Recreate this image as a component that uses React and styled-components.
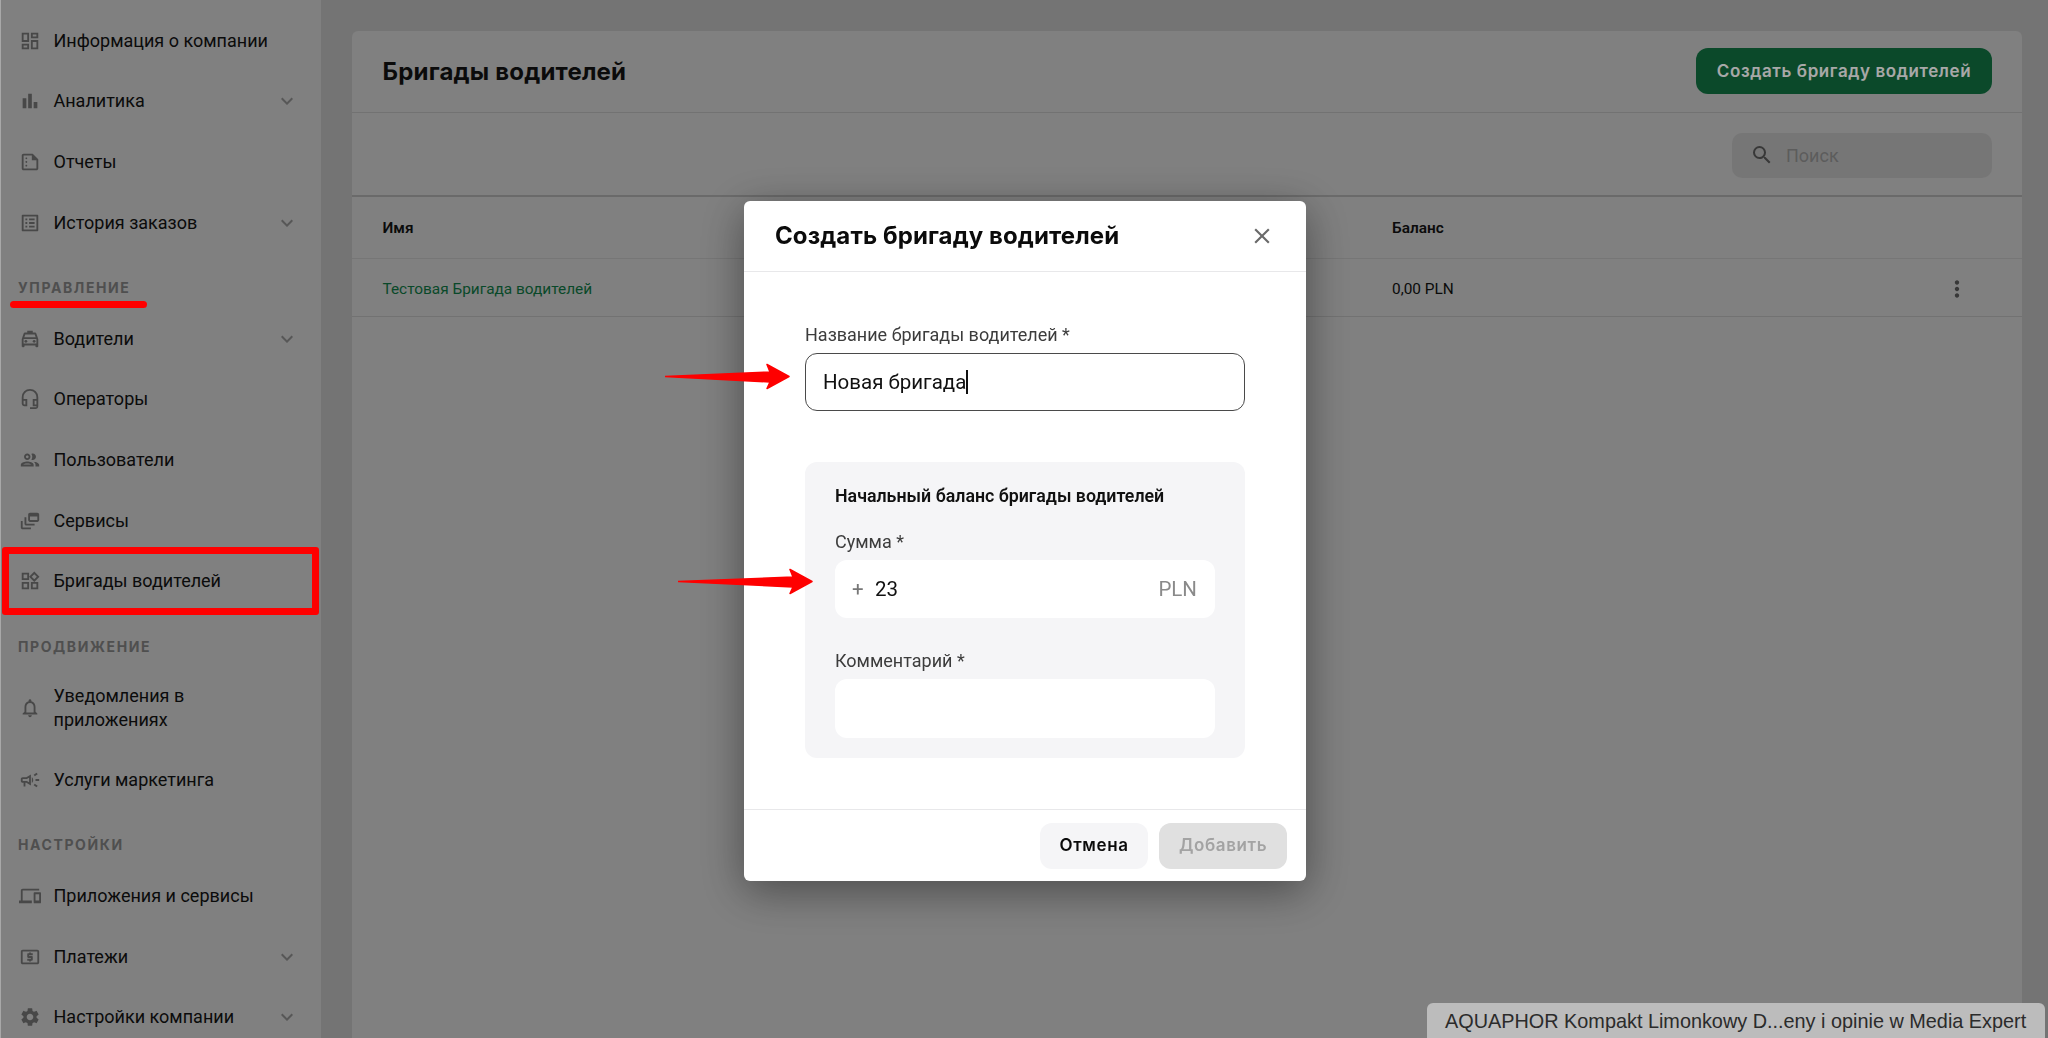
import React from 'react'
import styled, { createGlobalStyle } from 'styled-components'
import {
  MdBarChart,
  MdClose,
  MdExpandMore,
  MdMoreVert,
  MdOutlineCampaign,
  MdOutlineDashboard,
  MdOutlineDevices,
  MdOutlineDynamicFeed,
  MdOutlineHeadsetMic,
  MdOutlineListAlt,
  MdOutlineLocalAtm,
  MdOutlineLocalTaxi,
  MdOutlineNotifications,
  MdOutlinePeople,
  MdOutlineSummarize,
  MdOutlineWidgets,
  MdSearch,
  MdSettings,
} from 'react-icons/md'

const BODY_FONT = "Roboto, 'Liberation Sans', sans-serif"
const HEADING_FONT = "Inter, 'Noto Sans', sans-serif"

const GlobalStyle = createGlobalStyle`
  html, body {
    margin: 0;
    height: 100%;
    overflow: hidden;
  }
  body {
    font-family: ${BODY_FONT};
    color: #111;
  }
  * {
    box-sizing: border-box;
  }
`

const Page = styled.div`
  display: flex;
  height: 100vh;
  background: #b1b1b1;
  overflow: hidden;
`

const Sidebar = styled.nav`
  flex: 0 0 321px;
  padding-top: 10.3px;
  background: #c2c2c2;
  border-left: 1px solid #fff;
  overflow: hidden;
`

const NavRow = styled.div`
  display: flex;
  align-items: center;
  height: ${(p) => (p.$tall ? '82.6px' : '60.67px')};
  padding: 0 22px 0 18px;
  font-size: 18px;
  line-height: 24px;
  color: #111;

  svg {
    flex: 0 0 auto;
  }
`

const NavIcon = styled.span`
  display: flex;
  flex: 0 0 34.5px;
  font-size: 22px;
  color: #6e6e6e;
`

const NavText = styled.span`
  flex: 1;
  max-width: 226px;
`

const NavChevron = styled(MdExpandMore)`
  margin-left: auto;
  font-size: 24px;
  color: #858585;
`

const SectionLabel = styled.div`
  height: 55.4px;
  padding: 25px 0 0 17px;
  font-family: ${HEADING_FONT};
  font-size: 14px;
  font-weight: 700;
  line-height: 20px;
  letter-spacing: 1.6px;
  color: #787878;
`

const Main = styled.main`
  flex: 1;
  padding: 31px 26px 0 31px;
  min-width: 0;
`

const Card = styled.section`
  height: 100%;
  background: #c2c2c2;
  border-radius: 6px 6px 0 0;
`

const CardHeader = styled.header`
  display: flex;
  align-items: center;
  justify-content: space-between;
  height: 82px;
  padding: 0 30px 1px 30.5px;
  border-bottom: 1px solid #adadad;
`

const CardTitle = styled.h1`
  margin: 0;
  font-family: ${HEADING_FONT};
  font-size: 24px;
  font-weight: 700;
  letter-spacing: 0.2px;
  color: #111;
`

const PrimaryButton = styled.button`
  width: 296px;
  height: 46px;
  border: 0;
  border-radius: 12px;
  background: #117041;
  color: #fff;
  font-family: ${HEADING_FONT};
  font-size: 17px;
  font-weight: 600;
  letter-spacing: 0.6px;
`

const Toolbar = styled.div`
  display: flex;
  justify-content: flex-end;
  align-items: center;
  height: 84px;
  padding: 2px 30px 0 0;
  border-bottom: 2px solid #a2a2a2;
`

const SearchBox = styled.div`
  display: flex;
  align-items: center;
  gap: 12px;
  width: 260px;
  height: 45px;
  padding: 0 18px;
  border-radius: 10px;
  background: #b4b4b4;
  font-size: 18px;
  color: #8c8c8c;

  svg {
    font-size: 24px;
    color: #555;
  }
`

const TableRow = styled.div`
  display: grid;
  grid-template-columns: 1009.5px 1fr 48px;
  align-items: center;
  height: ${(p) => (p.$head ? '62px' : '58px')};
  padding: ${(p) => (p.$head ? '0' : '3px')} 30px 0 30.5px;
  border-bottom: 1px solid ${(p) => (p.$head ? '#b3b3b3' : '#adadad')};
  font-size: 15.4px;
  font-weight: ${(p) => (p.$head ? 600 : 400)};
`

const TeamLink = styled.span`
  color: #0f7040;
`

const RowMenu = styled(MdMoreVert)`
  font-size: 26px;
  color: #555;
`

const Overlay = styled.div`
  position: fixed;
  inset: 0;
  display: flex;
  justify-content: center;
  align-items: flex-start;
  padding-top: 201px;
  padding-left: 2px;
  background: rgba(0, 0, 0, 0.34);
`

const Modal = styled.div`
  width: 562px;
  height: 680px;
  background: #fff;
  border-radius: 6px;
  box-shadow: 0 10px 44px rgba(0, 0, 0, 0.42);
  display: flex;
  flex-direction: column;
`

const ModalHeader = styled.header`
  display: flex;
  align-items: center;
  justify-content: space-between;
  flex: 0 0 71px;
  padding: 0 31px 1px 31px;
  border-bottom: 1px solid #e8e8ea;
`

const ModalTitle = styled.h2`
  margin: 0;
  font-family: ${HEADING_FONT};
  font-size: 24px;
  font-weight: 700;
  letter-spacing: 0.1px;
  color: #0b0b0b;
`

const CloseIcon = styled(MdClose)`
  font-size: 26px;
  color: #6a6a6a;
`

const ModalBody = styled.div`
  flex: 1;
  padding: 51px 61px 0 61px;
`

const FieldLabel = styled.label`
  display: block;
  height: 30px;
  font-size: 18px;
  line-height: 24px;
  color: #3c3c3c;
`

const NameField = styled.div`
  display: flex;
  align-items: center;
  height: 58px;
  padding: 0 17px;
  border: 1px solid #4a4a4a;
  border-radius: 12px;
  font-size: 20.5px;
  color: #111;
`

const Caret = styled.span`
  width: 1.5px;
  height: 24px;
  background: #111;
`

const BalancePanel = styled.div`
  height: 296px;
  margin-top: 51px;
  padding: 23px 30px 0;
  border-radius: 12px;
  background: #f5f5f7;
`

const PanelTitle = styled.div`
  height: 44.5px;
  font-size: 17.8px;
  font-weight: 600;
  line-height: 22px;
  color: #111;
`

const AmountField = styled.div`
  display: flex;
  align-items: center;
  height: 58px;
  margin-bottom: 31px;
  padding: 0 18px 0 17px;
  border-radius: 12px;
  background: #fff;
  font-size: 20.5px;
  color: #111;
`

const AmountSign = styled.span`
  width: 23px;
  color: #777;
`

const AmountCurrency = styled.span`
  margin-left: auto;
  color: #8a8a8a;
`

const CommentField = styled.div`
  height: 59px;
  border-radius: 12px;
  background: #fff;
`

const ModalFooter = styled.footer`
  display: flex;
  justify-content: flex-end;
  align-items: center;
  gap: 11px;
  flex: 0 0 72px;
  padding: 0 19px 0 0;
  border-top: 1px solid #e8e8ea;
`

const FooterButton = styled.button`
  width: ${(p) => (p.$disabled ? '128px' : '108px')};
  height: 46px;
  padding: 0 0 2px;
  border: 0;
  border-radius: 12px;
  background: ${(p) => (p.$disabled ? '#e0e0e0' : '#f5f5f7')};
  color: ${(p) => (p.$disabled ? '#a3a3a3' : '#0b0b0b')};
  font-family: ${HEADING_FONT};
  font-size: 17px;
  font-weight: 600;
  letter-spacing: 0.6px;
`

const LinkPreview = styled.div`
  position: fixed;
  left: 1427px;
  right: 3px;
  bottom: 0;
  height: 35px;
  padding: 6px 0 0 18px;
  border-radius: 6px 6px 0 0;
  background: #bcbcbc;
  font-family: 'Liberation Sans', sans-serif;
  font-size: 19.85px;
  line-height: 24px;
  white-space: nowrap;
  color: #2b2b2b;
`

const RedBox = styled.div`
  position: fixed;
  left: 2px;
  top: 547px;
  width: 317px;
  height: 68px;
  border: 7px solid #fe0000;
  border-radius: 3px;
`

const RedUnderline = styled.div`
  position: fixed;
  left: 10px;
  top: 301px;
  width: 137px;
  height: 7px;
  border-radius: 4px;
  background: #fe0000;
`

const ArrowSvg = styled.svg`
  position: fixed;
  left: ${(p) => p.$left}px;
  top: ${(p) => p.$top}px;
`

const RedArrow = ({ left, top, length }) => (
  <ArrowSvg $left={left} $top={top} width={length} height="34" viewBox={`0 0 ${length} 34`}>
    <path
      d={`M0 16.5 L${length - 20} 12 L${length - 23} 4.5 L${length - 1} 16.5 L${length - 23} 28.5 L${length - 20} 22 Z`}
      fill="#fe0000"
      stroke="#fe0000"
      strokeWidth="1.5"
      strokeLinejoin="round"
    />
  </ArrowSvg>
)

const SidebarItem = ({ icon: Icon, label, expandable, tall }) => (
  <NavRow $tall={tall}>
    <NavIcon>
      <Icon />
    </NavIcon>
    <NavText>{label}</NavText>
    {expandable && <NavChevron />}
  </NavRow>
)

const App = () => (
  <>
    <GlobalStyle />
    <Page>
      <Sidebar>
        <SidebarItem icon={MdOutlineDashboard} label="Информация о компании" />
        <SidebarItem icon={MdBarChart} label="Аналитика" expandable />
        <SidebarItem icon={MdOutlineSummarize} label="Отчеты" />
        <SidebarItem icon={MdOutlineListAlt} label="История заказов" expandable />
        <SectionLabel>УПРАВЛЕНИЕ</SectionLabel>
        <SidebarItem icon={MdOutlineLocalTaxi} label="Водители" expandable />
        <SidebarItem icon={MdOutlineHeadsetMic} label="Операторы" />
        <SidebarItem icon={MdOutlinePeople} label="Пользователи" />
        <SidebarItem icon={MdOutlineDynamicFeed} label="Сервисы" />
        <SidebarItem icon={MdOutlineWidgets} label="Бригады водителей" />
        <SectionLabel>ПРОДВИЖЕНИЕ</SectionLabel>
        <SidebarItem icon={MdOutlineNotifications} label="Уведомления в приложениях" tall />
        <SidebarItem icon={MdOutlineCampaign} label="Услуги маркетинга" />
        <SectionLabel>НАСТРОЙКИ</SectionLabel>
        <SidebarItem icon={MdOutlineDevices} label="Приложения и сервисы" />
        <SidebarItem icon={MdOutlineLocalAtm} label="Платежи" expandable />
        <SidebarItem icon={MdSettings} label="Настройки компании" expandable />
      </Sidebar>
      <Main>
        <Card>
          <CardHeader>
            <CardTitle>Бригады водителей</CardTitle>
            <PrimaryButton>Создать бригаду водителей</PrimaryButton>
          </CardHeader>
          <Toolbar>
            <SearchBox>
              <MdSearch />
              Поиск
            </SearchBox>
          </Toolbar>
          <TableRow $head>
            <span>Имя</span>
            <span>Баланс</span>
          </TableRow>
          <TableRow>
            <TeamLink>Тестовая Бригада водителей</TeamLink>
            <span>0,00 PLN</span>
            <RowMenu />
          </TableRow>
        </Card>
      </Main>
    </Page>
    <Overlay>
      <Modal>
        <ModalHeader>
          <ModalTitle>Создать бригаду водителей</ModalTitle>
          <CloseIcon />
        </ModalHeader>
        <ModalBody>
          <FieldLabel>Название бригады водителей *</FieldLabel>
          <NameField>
            Новая бригада
            <Caret />
          </NameField>
          <BalancePanel>
            <PanelTitle>Начальный баланс бригады водителей</PanelTitle>
            <FieldLabel>Сумма *</FieldLabel>
            <AmountField>
              <AmountSign>+</AmountSign>
              23
              <AmountCurrency>PLN</AmountCurrency>
            </AmountField>
            <FieldLabel>Комментарий *</FieldLabel>
            <CommentField />
          </BalancePanel>
        </ModalBody>
        <ModalFooter>
          <FooterButton>Отмена</FooterButton>
          <FooterButton $disabled>Добавить</FooterButton>
        </ModalFooter>
      </Modal>
    </Overlay>
    <RedBox />
    <RedUnderline />
    <RedArrow left={665} top={360} length={125} />
    <RedArrow left={678} top={565} length={135} />
    <LinkPreview>AQUAPHOR Kompakt Limonkowy D...eny i opinie w Media Expert</LinkPreview>
  </>
)

export default App
